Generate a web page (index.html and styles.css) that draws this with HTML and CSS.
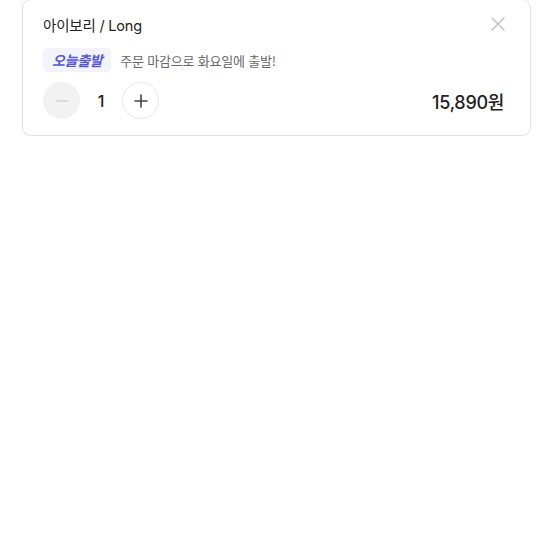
FILE: index.html
```html
<!DOCTYPE html>
<html lang="ko">
<head>
<meta charset="utf-8">
<link rel="stylesheet" href="styles.css">
</head>
<body>
<div class="page">
  <div class="card">
    <div class="row head">
      <div class="title">아이보리 / Long</div>
      <button class="close" aria-label="닫기">
        <svg width="16" height="16" viewBox="0 0 16 16"><path d="M2 2L14 14M14 2L2 14" stroke="#c4c4c4" stroke-width="1.6" stroke-linecap="round"/></svg>
      </button>
    </div>
    <div class="row ship">
      <span class="badge">오늘출발</span>
      <span class="ship-text">주문 마감으로 화요일에 출발!</span>
    </div>
    <div class="row qty-row">
      <div class="qty">
        <button class="qbtn minus" aria-label="빼기">
          <svg width="16" height="16" viewBox="0 0 16 16"><path d="M2 8H14" stroke="#d4d4d4" stroke-width="1.6" stroke-linecap="round"/></svg>
        </button>
        <span class="count">1</span>
        <button class="qbtn plus" aria-label="더하기">
          <svg width="16" height="16" viewBox="0 0 16 16"><path d="M2 8H14M8 2V14" stroke="#444" stroke-width="1.6" stroke-linecap="round"/></svg>
        </button>
      </div>
      <div class="price">15,890원</div>
    </div>
  </div>
</div>
</body>
</html>
```

FILE: styles.css
```css
* { box-sizing: border-box; }
html, body { margin: 0; padding: 0; background: #fff; }
body {
  font-family: Inter, "Noto Sans CJK KR", "Noto Sans", sans-serif;
  color: #222;
}
.page { padding: 0 22px; }
.card {
  height: 137px;
  margin-top: -1px;
  border: 1px solid #e2e2e2;
  border-radius: 9px;
  padding: 14px 20px 0 20px;
  box-shadow: 0 1px 2px rgba(0,0,0,0.04);
}
.row { display: flex; align-items: center; }
.head { justify-content: space-between; height: 20px; }
.title { font-size: 14.5px; color: #222; letter-spacing: -0.2px; }
.close {
  border: 0; background: none; padding: 0; margin-right: 4px;
  width: 16px; height: 16px; display: flex;
}
.ship { margin-top: 14px; height: 24px; }
.badge {
  display: inline-flex; align-items: center; justify-content: center;
  height: 24px; padding: 0 9px; border-radius: 5px;
  background: #f2f3fb;
  color: #5757d6;
  font-weight: 700; font-style: italic; font-size: 14px;
  letter-spacing: -0.3px;
  font-family: "Noto Sans CJK KR", sans-serif;
}
.ship-text {
  margin-left: 9px; font-size: 13px; color: #666;
  font-family: "Noto Sans CJK KR", sans-serif;
  letter-spacing: -0.2px;
}
.qty-row { margin-top: 10px; justify-content: space-between; height: 37px; }
.qty { display: flex; align-items: center; }
.qbtn {
  width: 37px; height: 37px; border-radius: 50%;
  display: flex; align-items: center; justify-content: center;
  padding: 0;
}
.minus { background: #f2f2f2; border: 0; }
.plus { background: #fff; border: 1px solid #e6e6e6; }
.count {
  width: 42px; text-align: center; font-size: 16px; font-weight: 500; color: #222;
}
.price {
  font-size: 18px; font-weight: 500; color: #222; letter-spacing: -0.3px;
  margin-right: 6px;
}
```
